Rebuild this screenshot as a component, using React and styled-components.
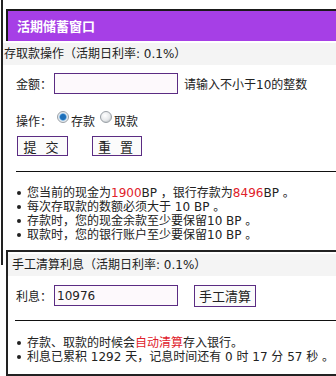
import React from 'react';
import styled, { createGlobalStyle } from 'styled-components';

const GlobalStyle = createGlobalStyle`
  body {
    margin: 0;
    background: #fff;
    overflow: hidden;
    font-family: "DejaVu Sans", "Noto Sans CJK SC", sans-serif;
    font-size: 12px;
    color: #222;
  }
`;

const Frame = styled.div`
  margin-left: 1px;
  width: 335px;
  height: 265px;
  box-sizing: border-box;
  border-left: 2px solid #222;
  display: flex;
  flex-direction: column;
`;

const Header = styled.div`
  margin: 9px 0 0 3px;
  height: 30px;
  border-top: 2px solid #1a1a1a;
  border-left: 2px solid #1a1a1a;
  background: #a63fe6;
  color: #fff;
  font-family: "Noto Sans CJK SC", sans-serif;
  font-weight: 700;
  font-size: 13px;
  line-height: 30px;
  padding-left: 9px;
`;

const SectionTitle = styled.div`
  margin-top: 2px;
  height: 22px;
  line-height: 22px;
  background: #f4f4f4;
  padding-left: ${p => p.$indent}px;
  white-space: nowrap;
  overflow: hidden;
`;

const Body = styled.div`
  padding-left: ${p => p.$indent}px;
  display: flex;
  flex-direction: column;
`;

const Row = styled.div`
  display: flex;
  align-items: center;
  margin-top: ${p => p.$top}px;
  height: ${p => p.$h || 21}px;
  white-space: nowrap;
`;

const Label = styled.span`
  width: 38px;
  flex: none;
  font-family: "Noto Sans CJK SC", sans-serif;
`;

const TextBox = styled.input`
  box-sizing: border-box;
  width: 124px;
  height: 21px;
  border: 1px solid #5b2c83;
  background: #fdf9fc;
  padding: 0 2px;
  font-family: "DejaVu Sans", sans-serif;
  font-size: 12px;
  color: #222;
  outline: none;
`;

const Hint = styled.span`
  margin-left: 6px;
`;

const Radio = styled.span`
  box-sizing: border-box;
  width: 12px;
  height: 12px;
  border-radius: 50%;
  margin: -6px 2px 0 ${p => p.$gap}px;
  border: 1px solid #9aa0a6;
  background: ${p =>
    p.$on
      ? 'radial-gradient(circle at 50% 50%, #1f6fb8 0 2.5px, #3b8fd6 3px, #dde6ee 4px, #f4f6f8 6px)'
      : 'radial-gradient(circle at 40% 35%, #ffffff 0, #e6e8ea 5px, #cfd3d6 6px)'};
`;

const Button = styled.button`
  box-sizing: border-box;
  width: ${p => p.$w}px;
  height: ${p => p.$h}px;
  margin-left: ${p => p.$gap}px;
  border: 1px solid #5b2c83;
  background: #fbfbfb;
  font-family: "Noto Sans CJK SC", sans-serif;
  font-size: 13px;
  color: #222;
  padding: 0;
  letter-spacing: ${p => p.$spread || 0}px;
`;

const Rule = styled.div`
  margin: ${p => p.$top}px 0 0 ${p => p.$left}px;
  height: 1px;
  background: #111;
`;

const List = styled.ul`
  list-style: none;
  margin: ${p => p.$top}px 0 0;
  padding: 0 0 0 ${p => p.$left}px;
`;

const Item = styled.li`
  display: flex;
  align-items: center;
  height: 14px;
  line-height: 14px;
  white-space: nowrap;
  &::before {
    content: '';
    width: 4px;
    height: 4px;
    border-radius: 50%;
    background: #222;
    margin-right: 6px;
    flex: none;
  }
`;

const Red = styled.span`
  color: #e0212b;
`;

const Panel = styled.div`
  margin: -15px 0 0 6px;
  width: 330px;
  box-sizing: border-box;
  border-top: 2px solid #222;
  border-left: 2px solid #222;
  border-bottom: 2px solid #222;
  padding-bottom: 10px;
`;

export default function App() {
  return (
    <>
      <GlobalStyle />
      <Frame>
        <Header>活期储蓄窗口</Header>
        <SectionTitle $indent={1}>存取款操作（活期日利率: 0.1%）</SectionTitle>
        <Body $indent={13}>
          <Row $top={8}>
            <Label>金额：</Label>
            <TextBox defaultValue="" />
            <Hint>请输入不小于10的整数</Hint>
          </Row>
          <Row $top={16} $h={20}>
            <Label>操作：</Label>
            <Radio $on $gap={3} />
            <span>存款</span>
            <Radio $gap={5} />
            <span>取款</span>
          </Row>
          <Row $top={6} $h={20}>
            <Button $w={51} $h={20} $gap={1} $spread={3}>提 交</Button>
            <Button $w={50} $h={20} $gap={24} $spread={3}>重 置</Button>
          </Row>
        </Body>
        <Rule $top={15} $left={13} />
        <List $top={14} $left={14}>
          <Item>
            您当前的现金为<Red>1900</Red>BP ，银行存款为<Red>8496</Red>BP 。
          </Item>
          <Item>每次存取款的数额必须大于 10 BP 。</Item>
          <Item>存款时，您的现金余款至少要保留10 BP 。</Item>
          <Item>取款时，您的银行账户至少要保留10 BP 。</Item>
        </List>
      </Frame>
      <Panel>
        <SectionTitle $indent={4}>手工清算利息（活期日利率: 0.1%）</SectionTitle>
        <Body $indent={8}>
          <Row $top={9}>
            <Label>利息：</Label>
            <TextBox defaultValue="10976" />
            <Button $w={62} $h={22} $gap={16}>手工清算</Button>
          </Row>
        </Body>
        <Rule $top={14} $left={7} />
        <List $top={15} $left={9}>
          <Item>
            存款、取款的时候会<Red>自动清算</Red>存入银行。
          </Item>
          <Item>利息已累积 1292 天，记息时间还有 0 时 17 分 57 秒 。</Item>
        </List>
      </Panel>
    </>
  );
}
